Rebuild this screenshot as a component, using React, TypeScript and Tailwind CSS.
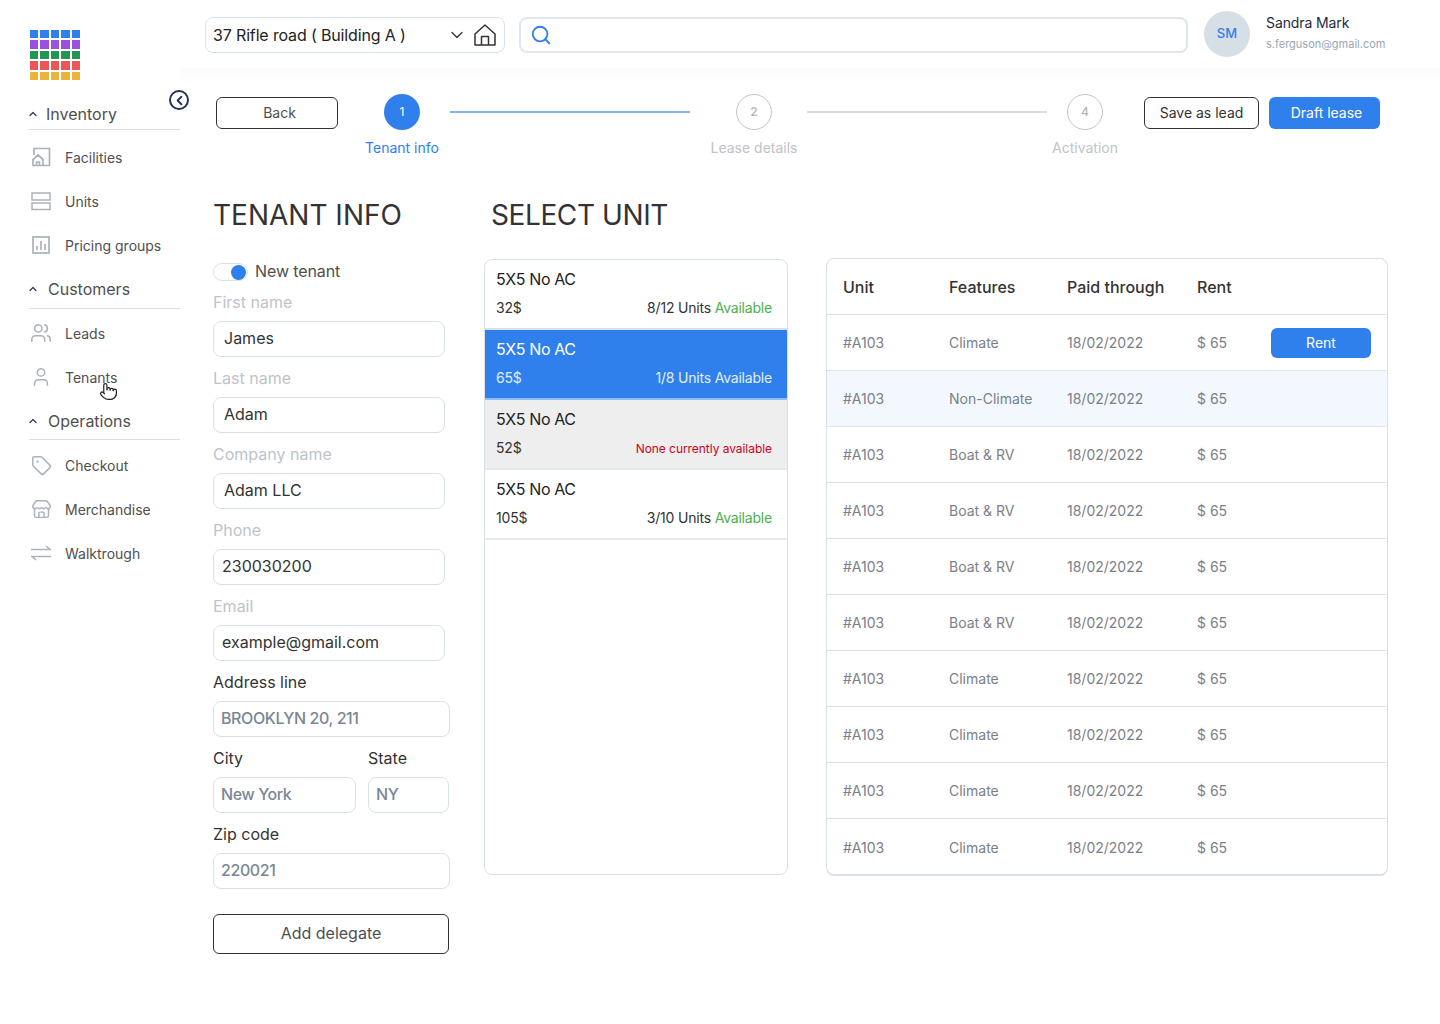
import React from "react";
import { ChevronDown, ChevronUp, ChevronLeft, Search, Users, User, Tag, Store, Pointer } from "lucide-react";

const Facility = () => (
  <svg width="20" height="20" viewBox="0 0 20 20" fill="none" stroke="#aab3bb" strokeWidth="1.7">
    <path d="M3 8V1.500h15.500V18.500H2v-6L7 8l5 4.500v6M5.500 18.500V15h3v3.500" />
  </svg>
);
const UnitsIcon = () => (
  <svg width="20" height="20" viewBox="0 0 20 20" fill="none" stroke="#aab3bb" strokeWidth="1.5">
    <rect x="1" y="2" width="18" height="7" />
    <rect x="1" y="12" width="18" height="6.500" />
  </svg>
);
const Pricing = () => (
  <svg width="20" height="20" viewBox="0 0 20 20" fill="none" stroke="#aab3bb" strokeWidth="1.7">
    <rect x="2" y="2" width="16" height="16" />
    <path d="M6 15v-4M10 15V6M14 15V9" />
  </svg>
);
const Swap = () => (
  <svg width="22" height="20" viewBox="0 0 22 20" fill="none" stroke="#aab3bb" strokeWidth="1.6">
    <path d="M1 6.500h20M16 3l4 3.500M1 13.500h20M6 17l-4-3.500" />
  </svg>
);
const Home = () => (
  <svg width="24" height="24" viewBox="0 0 24 24" fill="none" stroke="#333333" strokeWidth="1.5" className="shrink-0">
    <path d="M2 11 12 2l10 9v11H2zM8.500 22v-8.500h7V22" strokeLinejoin="round" />
  </svg>
);

const Item = ({ icon, label }: { icon: React.ReactNode; label: string }) => (
  <div className="flex h-[44px] items-center">
    <div className="flex w-[24px] justify-center">{icon}</div>
    <span className="ml-[12px] text-[14px] text-[#4f4f4f]">{label}</span>
  </div>
);

const Section = ({ label, ml, h }: { label: string; ml: string; h: string }) => (
  <div className={`flex ${h} items-center border-b border-[#d8dfe6]`}>
    <ChevronUp size={12} strokeWidth={2.5} className="ml-[-2px] text-[#2d3a5c]" />
    <span className={`${ml} text-[16px] text-[#4f4f4f]`}>{label}</span>
  </div>
);

const logoColors = ["bg-[#2f80ed]", "bg-[#9b51e0]", "bg-[#219653]", "bg-[#eb5757]", "bg-[#e9b53d]"];
const iconCls = "text-[#aab3bb]";

const Sidebar = () => (
  <aside className="w-[180px] shrink-0 pl-[29px] pt-[30px]">
    <div className="ml-[1px] grid h-[50px] w-[50px] grid-cols-5 gap-[2px]">
      {logoColors.flatMap((c, r) => [0, 1, 2, 3, 4].map((i) => <div key={`${r}${i}`} className={c} />))}
    </div>
    <div className="mt-[20px]">
      <Section label="Inventory" ml="ml-[7px]" h="h-[30px] pb-[2px]" />
      <div className="pt-[5px]">
        <Item icon={<Facility />} label="Facilities" />
        <Item icon={<UnitsIcon />} label="Units" />
        <Item icon={<Pricing />} label="Pricing groups" />
      </div>
      <Section label="Customers" ml="ml-[9px]" h="h-[42px] pt-[2px]" />
      <div className="pt-[2px]">
        <Item icon={<Users size={22} strokeWidth={1.7} className={iconCls} />} label="Leads" />
        <Item icon={<User size={22} strokeWidth={1.7} className={iconCls} />} label="Tenants" />
      </div>
      <Section label="Operations" ml="ml-[9px]" h="h-[41px] pt-[4px]" />
      <div className="pt-[3px]">
        <Item icon={<Tag size={21} strokeWidth={1.7} className={iconCls} />} label="Checkout" />
        <Item icon={<Store size={21} strokeWidth={1.7} className={iconCls} />} label="Merchandise" />
        <Item icon={<Swap />} label="Walktrough" />
      </div>
    </div>
  </aside>
);

const Header = () => (
  <header className="flex h-[68px] items-start pl-[25px] pt-[11px]">
    <div className="mt-[6px] flex h-[36px] w-[300px] items-center rounded-[8px] border border-[#d8e1ea] pl-[7px] pr-[7px]">
      <span className="flex-1 pb-[1px] text-[16px] tracking-[-0.15px] text-[#222222]">37 Rifle road ( Building A )</span>
      <ChevronDown size={20} strokeWidth={1.6} className="mr-[6px] text-[#333333]" />
      <Home />
    </div>
    <div className="ml-[14px] mt-[6px] flex h-[36px] w-[669px] items-center rounded-[8px] border-2 border-[#dfe6ee] pl-[9px]">
      <Search size={22} strokeWidth={2} className="text-[#2f80ed]" />
    </div>
    <div className="ml-[16px] flex h-[46px] w-[46px] items-center justify-center rounded-full bg-[#d6dee6] text-[13px] font-medium text-[#2f80ed]">SM</div>
    <div className="ml-[16px]">
      <div className="mt-[2px] text-[14px] leading-[20px] tracking-[-0.1px] text-[#1f2a3d]">Sandra Mark</div>
      <div className="mt-[1px] text-[11px] leading-[20px] text-[#9aa7b8]">s.ferguson@gmail.com</div>
    </div>
  </header>
);

const Step = ({ n, label, active }: { n: string; label: string; active?: boolean }) => (
  <div className="relative flex h-[36px] w-[36px] shrink-0 justify-center">
    <div className={active
      ? "flex h-[36px] w-[36px] items-center justify-center rounded-full bg-[#2f80ed] text-[12px] text-white"
      : "flex h-[36px] w-[36px] items-center justify-center rounded-full border border-[#bdc4cb] text-[12px] font-medium text-[#b5b5b5]"}>{n}</div>
    <span className={`absolute top-[45px] whitespace-nowrap text-[14px] leading-[18px] ${active ? "text-[#2f80ed]" : "text-[#bdc3c9]"}`}>{label}</span>
  </div>
);

const Stepper = () => (
  <div className="flex h-[93px] items-start bg-gradient-to-b from-[#fafbfd] to-white to-[14%] pl-[36px] pt-[26px]">
    <button className="mt-[3px] h-[32px] w-[122px] rounded-[6px] border border-[#333333] pb-[2px] pl-[5px] text-[14px] text-[#4f4f4f]">Back</button>
    <div className="ml-[46px]"><Step n="1" label="Tenant info" active /></div>
    <div className="ml-[30px] mt-[17px] h-[2px] w-[240px] bg-[#82b3f3]" />
    <div className="ml-[46px]"><Step n="2" label="Lease details" /></div>
    <div className="ml-[35px] mt-[17px] h-[2px] w-[240px] bg-[#dcdcdc]" />
    <div className="ml-[20px]"><Step n="4" label="Activation" /></div>
    <button className="ml-[41px] mt-[3px] h-[32px] w-[115px] rounded-[6px] border border-[#333333] pb-[2px] text-[14px] text-[#333333]">Save as lead</button>
    <button className="ml-[10px] mt-[3px] h-[32px] w-[111px] rounded-[6px] bg-[#2f80ed] pb-[2px] pl-[4px] text-[14px] text-white">Draft lease</button>
  </div>
);

const Input = ({ value, w }: { value: string; w: string }) => (
  <div className={`flex h-[36px] ${w} items-center rounded-[8px] border border-[#d8e1ea] pb-[2px] pl-[7px] text-[16px] font-medium tracking-[-0.4px] text-[#7b8794]`}>{value}</div>
);
const Field = ({ label, value, pl }: { label: string; value: string; pl?: string }) => (
  <div className="mb-[12px]">
    <div className="mb-[10px] text-[16px] leading-[18px] text-[#bdc3c9]">{label}</div>
    <div className={`flex h-[36px] w-[232px] items-center rounded-[8px] border border-[#d8e1ea] pb-[2px] ${pl ?? "pl-[10px]"} text-[16px] text-[#333333]`}>{value}</div>
  </div>
);
const Dark = ({ children }: { children: React.ReactNode }) => (
  <div className="mb-[10px] text-[16px] leading-[18px] text-[#333333]">{children}</div>
);

const TenantForm = () => (
  <div className="w-[237px] shrink-0">
    <h2 className="text-[28px] font-normal leading-[40px] text-[#333333]">TENANT INFO</h2>
    <div className="mt-[28px] flex h-[18px] items-center">
      <div className="flex h-[18px] w-[35px] items-center justify-end rounded-full border border-[#d8e1ea] pr-[1px]">
        <div className="h-[15px] w-[15px] rounded-full bg-[#2f80ed]" />
      </div>
      <span className="ml-[7px] pb-[2px] text-[16px] tracking-[-0.1px] text-[#4f4f4f]">New tenant</span>
    </div>
    <div className="mt-[12px]">
      <Field label="First name" value="James" />
      <Field label="Last name" value="Adam" />
      <Field label="Company name" value="Adam LLC" />
      <Field label="Phone" value="230030200" pl="pl-[8px]" />
      <Field label="Email" value="example@gmail.com" pl="pl-[8px]" />
    </div>
    <Dark>Address line</Dark>
    <Input value="BROOKLYN 20, 211" w="w-[237px]" />
    <div className="mt-[12px] flex gap-[12px]">
      <div>
        <Dark>City</Dark>
        <Input value="New York" w="w-[143px]" />
      </div>
      <div>
        <Dark>State</Dark>
        <Input value="NY" w="w-[81px]" />
      </div>
    </div>
    <div className="mt-[12px]">
      <Dark>Zip code</Dark>
      <Input value="220021" w="w-[237px]" />
    </div>
    <button className="mt-[25px] h-[40px] w-[236px] rounded-[6px] border border-[#333333] pb-[2px] text-[16px] text-[#4f4f4f]">Add delegate</button>
  </div>
);

const Card = ({ price, right, cls, title, sub }: { price: string; right: React.ReactNode; cls: string; title: string; sub: string }) => (
  <div className={`h-[70px] border-b-2 px-[11px] pr-[15px] pt-[9px] ${cls}`}>
    <div className={`text-[16px] leading-[20px] tracking-[-0.4px] ${title}`}>5X5 No AC</div>
    <div className={`mt-[9px] flex items-center justify-between text-[14px] leading-[20px] tracking-[-0.2px] ${sub}`}>
      <span>{price}</span>
      <span>{right}</span>
    </div>
  </div>
);
const Avail = ({ t }: { t: string }) => <>{t} <span className="text-[#4caf50]">Available</span></>;

const UnitColumn = () => (
  <div className="ml-[34px] w-[304px] shrink-0">
    <h2 className="ml-[7px] text-[28px] font-normal leading-[40px] tracking-[-0.4px] text-[#333333]">SELECT UNIT</h2>
    <div className="mt-[24px] h-[616px] overflow-hidden rounded-[8px] border border-[#d8e1ea]">
      <Card price="32$" right={<Avail t="8/12 Units" />} cls="border-[#d8e1ea]" title="text-[#222222]" sub="text-[#333333]" />
      <Card price="65$" right="1/8 Units Available" cls="border-[#8fbcf5] bg-[#2f80ed]" title="text-white" sub="text-[#e3eefc]" />
      <Card price="52$" right={<span className="text-[12px] leading-[16px] tracking-[-0.05px] text-[#d0021b]">None currently available</span>} cls="border-[#e2e8ee] bg-[#eeeeee]" title="text-[#222222]" sub="text-[#333333]" />
      <Card price="105$" right={<Avail t="3/10 Units" />} cls="border-[#e6ebf0]" title="text-[#222222]" sub="text-[#333333]" />
    </div>
  </div>
);

const features = ["Climate", "Non-Climate", "Boat & RV", "Boat & RV", "Boat & RV", "Boat & RV", "Climate", "Climate", "Climate", "Climate"];

const UnitTable = () => (
  <div className="ml-[38px] mt-[63px] h-[618px] w-[562px] shrink-0 overflow-hidden rounded-[8px] border border-b-2 border-[#d8e1ea]">
    <div className="grid h-[56px] grid-cols-[106px_118px_130px_74px_100px] items-center border-b border-[#dde4eb] pl-[16px] text-[16px] font-medium text-[#333333]">
      <span>Unit</span><span>Features</span><span>Paid through</span><span>Rent</span>
    </div>
    {features.map((f, i) => (
      <div key={i} className={`grid h-[56px] grid-cols-[106px_118px_130px_74px_100px] items-center pl-[16px] text-[14px] text-[#7b8088] ${i < 9 ? "border-b border-[#dde4eb]" : ""} ${i === 1 ? "bg-[#f2f8fe]" : ""}`}>
        <span>#A103</span><span>{f}</span><span>18/02/2022</span><span>$ 65</span>
        {i === 0 ? <button className="h-[30px] w-[100px] rounded-[6px] bg-[#2f80ed] text-[14px] text-white">Rent</button> : <span />}
      </div>
    ))}
  </div>
);

export default function App() {
  return (
    <div className="relative flex min-h-[1024px] w-[1440px] overflow-hidden bg-white font-['Inter','Liberation_Sans',sans-serif]">
      <Sidebar />
      <main className="flex-1">
        <Header />
        <Stepper />
        <div className="flex pl-[33px] pt-[34px]">
          <TenantForm />
          <UnitColumn />
          <UnitTable />
        </div>
      </main>
      <button className="absolute left-[169px] top-[90px] flex h-[20px] w-[20px] items-center justify-center rounded-full border-2 border-[#24335a] bg-white text-[#24335a]">
        <ChevronLeft size={15} strokeWidth={3} />
      </button>
      <Pointer size={19} strokeWidth={1.5} className="absolute left-[99px] top-[382px] fill-white text-[#222222]" />
    </div>
  );
}
